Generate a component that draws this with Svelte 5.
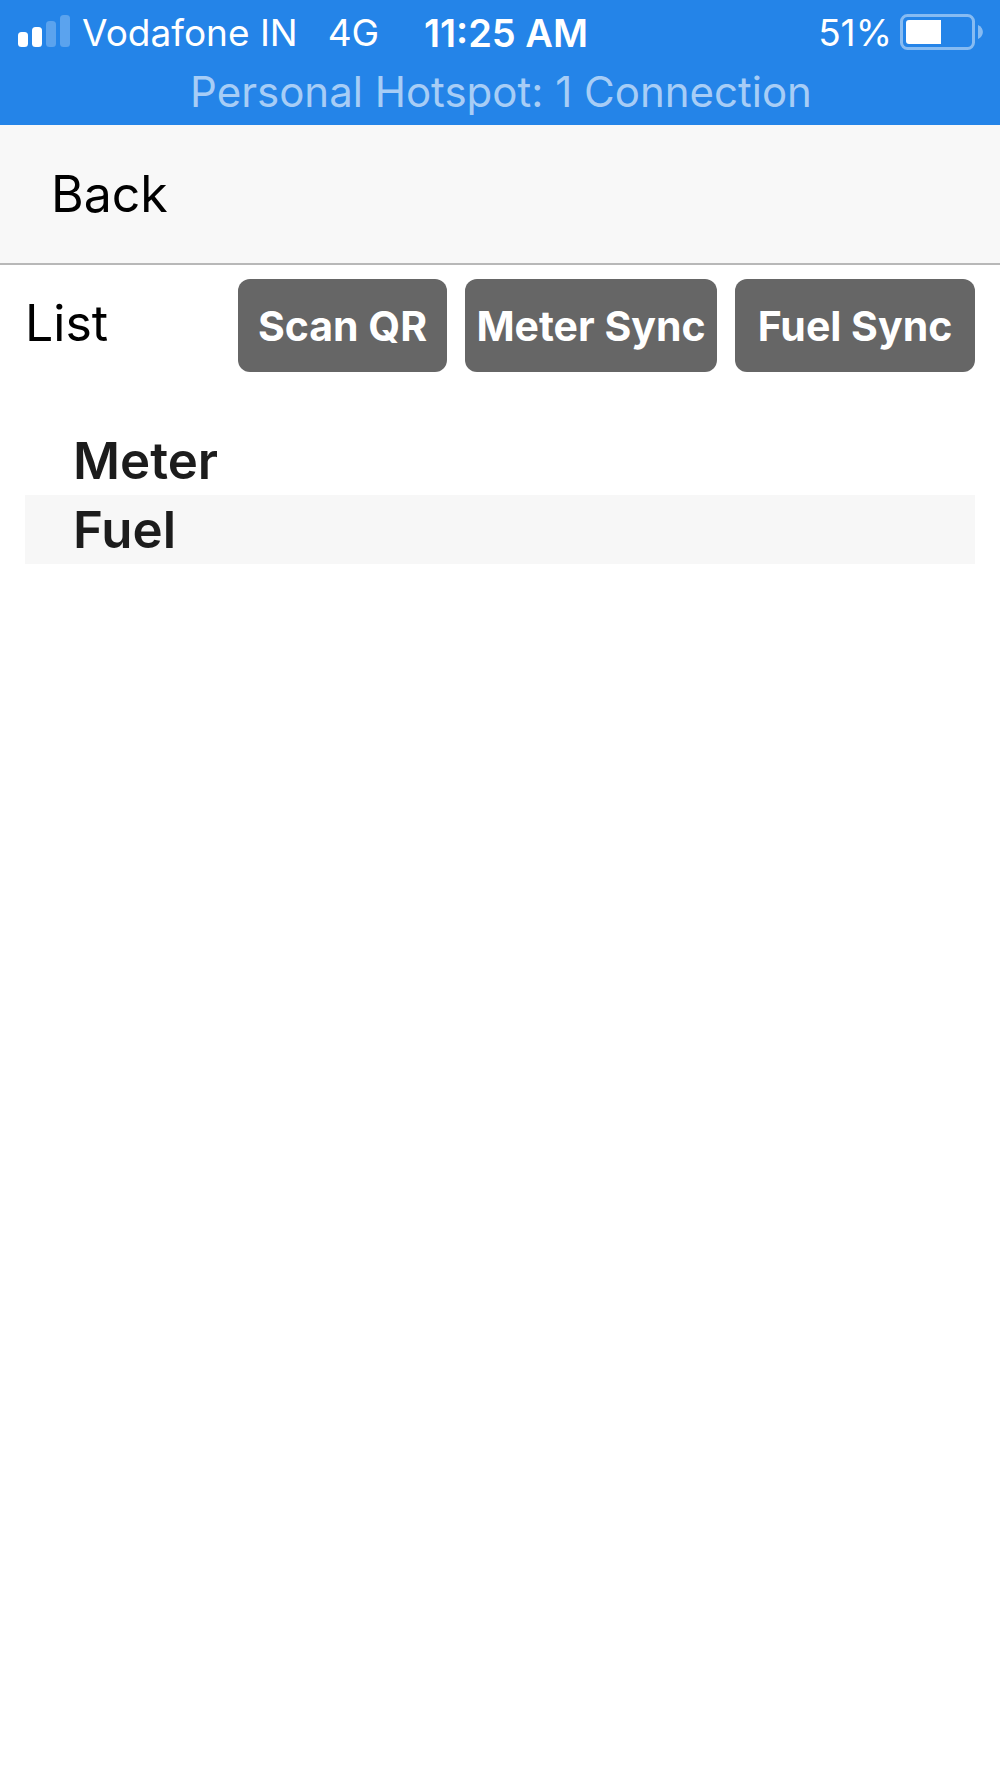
<script>
  const actions = ['Scan QR', 'Meter Sync', 'Fuel Sync'];
  const items = ['Meter', 'Fuel'];
  const bars = [
    { x: 0, h: 15, on: true },
    { x: 14, h: 20, on: true },
    { x: 28, h: 26, on: false },
    { x: 42, h: 32, on: false }
  ];
</script>

<div class="screen">
  <header class="status">
    <div class="status-row">
      <div class="carrier">
        <svg class="signal" viewBox="0 0 52 36" aria-hidden="true">
          {#each bars as bar}
            <rect x={bar.x} y={32 - bar.h} width="10" height={bar.h} rx="3.5" fill="#fff" fill-opacity={bar.on ? 1 : 0.25} />
          {/each}
        </svg>
        <span>Vodafone IN</span>
        <span class="network">4G</span>
      </div>
      <time class="time">11:25 AM</time>
      <div class="power">
        <span>51%</span>
        <svg class="battery" viewBox="0 0 84 38" aria-hidden="true">
          <rect x="1.5" y="1.5" width="72" height="33" rx="6" fill="none" stroke="#fff" stroke-opacity="0.45" stroke-width="3" />
          <path d="M9 6H41V30H9Q6 30 6 27V9Q6 6 9 6Z" fill="#fff" />
          <path d="M78 11C84.500 14 84.500 22 78 25Z" fill="#fff" fill-opacity="0.45" />
        </svg>
      </div>
    </div>
    <div class="hotspot">Personal Hotspot: 1 Connection</div>
  </header>

  <nav class="nav">
    <button class="back" type="button">Back</button>
  </nav>

  <main>
    <div class="toolbar">
      <h1>List</h1>
      <div class="actions">
        {#each actions as action}
          <button class="action" type="button">{action}</button>
        {/each}
      </div>
    </div>
    <ul class="list">
      {#each items as item}
        <li>{item}</li>
      {/each}
    </ul>
  </main>
</div>

<style>
  :global(body) {
    background: #fff;
  }
  .screen {
    min-height: 100vh;
    font-family: Inter, 'Liberation Sans', sans-serif;
    color: #000;
  }
  .status {
    background: #2484e8;
    color: #fff;
    height: 125px;
    box-sizing: border-box;
    padding: 9px 16px 0 18px;
    white-space: nowrap;
  }
  .status-row {
    display: grid;
    grid-template-columns: 1fr auto 1fr;
    align-items: center;
    height: 48px;
    font-size: 37px;
    line-height: 48px;
  }
  .carrier {
    display: flex;
    align-items: center;
  }
  .signal {
    width: 52px;
    height: 36px;
    margin-right: 12px;
  }
  .network {
    margin-left: 30px;
  }
  .time {
    font-size: 38px;
    font-weight: 600;
    margin-left: 10px;
  }
  .power {
    display: flex;
    align-items: center;
    justify-content: flex-end;
    gap: 8px;
  }
  .battery {
    width: 84px;
    height: 38px;
  }
  .hotspot {
    margin-top: 10px;
    text-align: center;
    font-size: 42px;
    line-height: 50px;
    color: #a7cdf6;
  }
  .nav {
    display: flex;
    align-items: center;
    height: 138px;
    background: #f8f8f8;
    border-bottom: 2px solid #b8b8b8;
    padding: 0 51px;
  }
  button {
    font: inherit;
    border: 0;
    margin: 0;
    padding: 0;
    cursor: pointer;
  }
  .back {
    background: none;
    color: #000;
    font-size: 50px;
    line-height: 60px;
  }
  main {
    padding: 14px 25px;
  }
  .toolbar {
    display: flex;
    justify-content: space-between;
  }
  h1 {
    margin: 0;
    font-size: 50px;
    font-weight: 400;
    line-height: 88px;
  }
  .actions {
    display: grid;
    grid-template-columns: 209fr 252fr 240fr;
    gap: 18px;
    flex: 0 0 737px;
  }
  .action {
    height: 93px;
    border-radius: 12px;
    background: #666;
    color: #fff;
    font-size: 41px;
    font-weight: 700;
    white-space: nowrap;
  }
  .list {
    list-style: none;
    margin: 54px 0 0;
    padding: 0;
    font-size: 51px;
    font-weight: 600;
    line-height: 69px;
    color: #1c1c1c;
  }
  li {
    padding: 0 48px;
  }
  li:nth-child(even) {
    background: #f7f7f7;
  }
</style>
